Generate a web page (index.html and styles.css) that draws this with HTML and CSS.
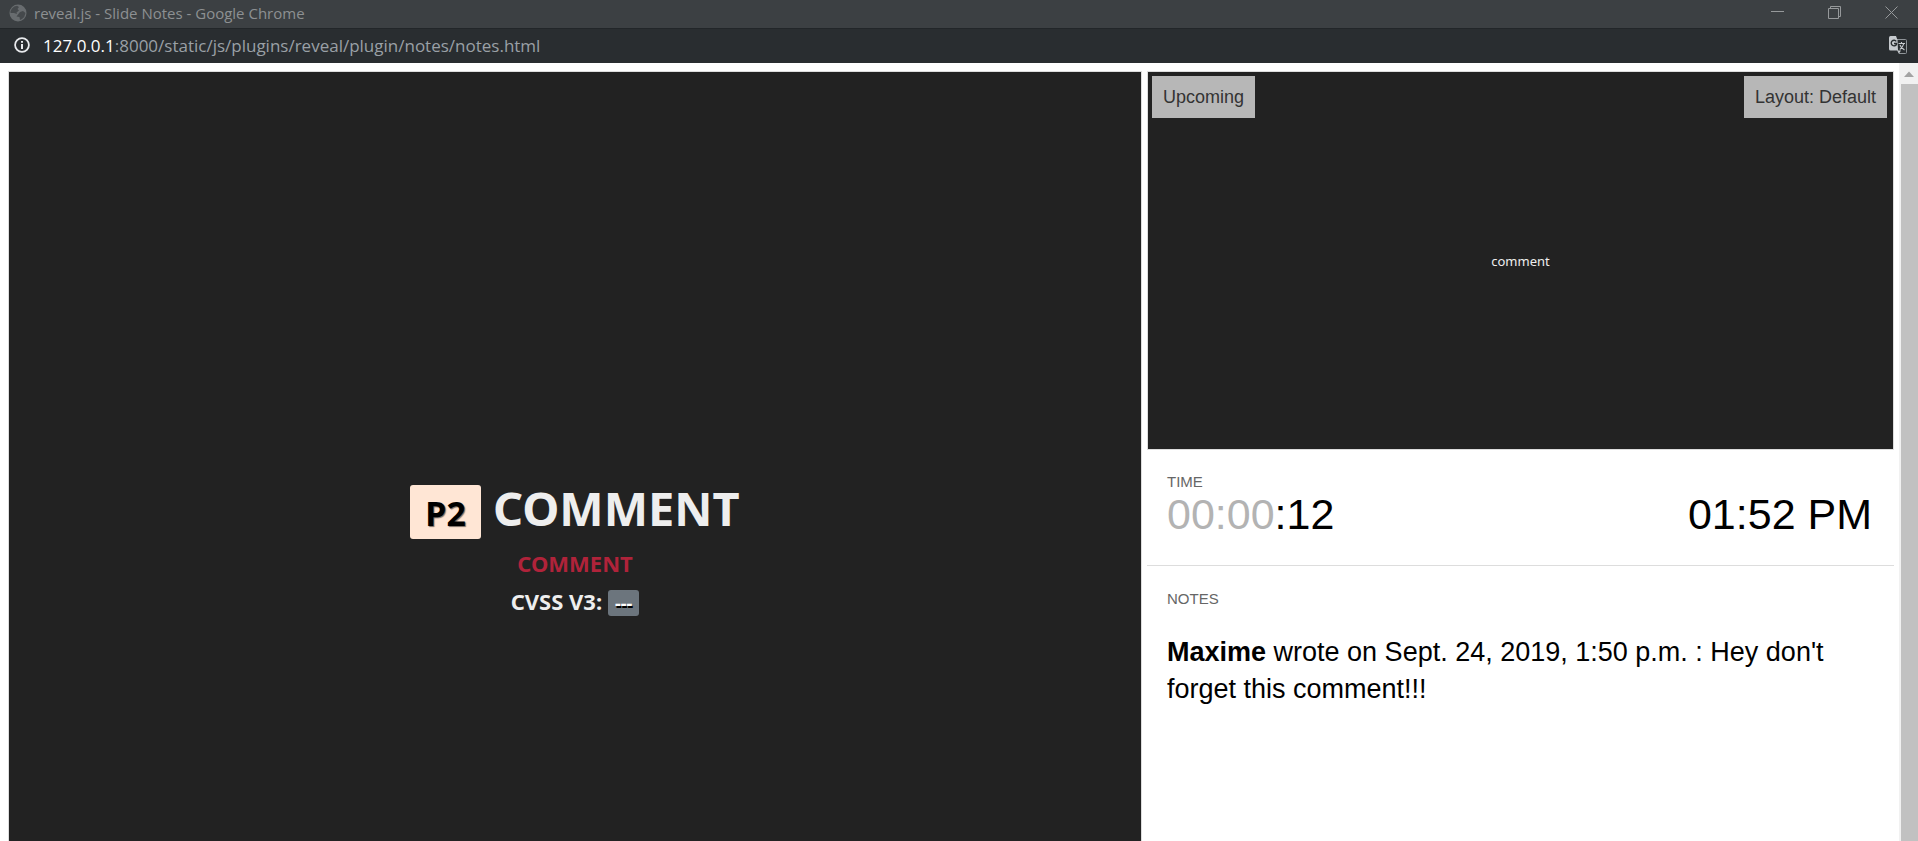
FILE: index.html
```html
<!DOCTYPE html>
<html lang="en">
<head>
<meta charset="utf-8">
<title>reveal.js - Slide Notes</title>
<link rel="stylesheet" href="styles.css">
</head>
<body>
<header class="titlebar">
  <svg class="globe" viewBox="0 0 18 18" aria-hidden="true"><circle cx="9" cy="9" r="8.500" fill="#686c6f"/><path d="M3 4.500Q5 2 8 1.800L10 3L8.500 5L10 6.500L7.500 8.500L8 10L5 9L1.500 9Q1.300 6.500 3 4.500ZM11 8L14 7L16.500 9Q16 13 13 15L11 16L10.500 13L7.500 12.500L9 10.500Z" fill="#45494c"/></svg>
  <span class="window-title">reveal.js - Slide Notes - Google Chrome</span>
  <div class="window-controls">
    <button type="button" aria-label="Minimize"><svg viewBox="0 0 14 14"><path d="M0 5.500H13"/></svg></button>
    <button type="button" aria-label="Restore"><svg viewBox="0 0 14 14"><path d="M.5 2.500H10.500V12.500H.5ZM2.500 2.500V.5H12.500V10.500H10.500"/></svg></button>
    <button type="button" aria-label="Close"><svg viewBox="0 0 14 14"><path d="M.5 .5L12.500 12.500M12.500 .5L.5 12.500"/></svg></button>
  </div>
</header>
<nav class="addressbar">
  <button type="button" class="info" aria-label="Site information"><svg viewBox="0 0 16 16"><circle cx="8" cy="8" r="6.900" fill="none" stroke="#e8eaed" stroke-width="1.800"/><path d="M7 4H9V5.800H7ZM7 7H9V12H7Z" fill="#e8eaed"/></svg></button>
  <span class="url"><b>127.0.0.1</b>:8000/static/js/plugins/reveal/plugin/notes/notes.html</span>
  <button type="button" class="translate" aria-label="Translate this page"><svg viewBox="0 0 18 18"><path d="M8 3.500H16.500Q17.500 3.500 17.500 4.500V16.500Q17.500 17.500 16.500 17.500H10L8.500 14" fill="none" stroke="#8f9498"/><path d="M1.500 0H7L8.500 4L9 14.500H1.500Q0 14.500 0 13V1.500Q0 0 1.500 0Z" fill="#c6cace"/><path d="M8.500 14.500H12L10 17.500Z" fill="#c6cace"/><path d="M7.300 5.400A2.800 2.800 0 1 0 7.500 8.400V7.500H5" fill="none" stroke="#292d30" stroke-width="1.400"/><path d="M9.500 7.500H16M12.500 6V7.500M14.800 7.500Q14 11 10.800 13.500M11 9Q12 12 15.500 14" fill="none" stroke="#c6cace" stroke-width="1.100"/></svg></button>
</nav>
<div class="viewport">
  <main class="notes-page">
    <section class="current-slide">
      <h1><span class="badge priority">P2</span> COMMENT</h1>
      <h2>COMMENT</h2>
      <h3>CVSS V3: <span class="badge score">---</span></h3>
    </section>
    <aside class="side">
      <section class="upcoming-slide">
        <span class="overlay upcoming-label">Upcoming</span>
        <button type="button" class="overlay layout-button">Layout: Default</button>
        <p>comment</p>
      </section>
      <section class="time">
        <h4>TIME</h4>
        <div class="clocks">
          <span><span class="mute">00:00</span>:12</span>
          <span>01:52 PM</span>
        </div>
      </section>
      <section class="notes">
        <h4>NOTES</h4>
        <p><strong>Maxime</strong> wrote on Sept. 24, 2019, 1:50 p.m. : Hey don't forget this comment!!!</p>
      </section>
    </aside>
  </main>
  <div class="scrollbar" aria-hidden="true">
    <svg viewBox="0 0 19 21"><path d="M5 14H15L10 8.500Z" fill="#a3a3a3"/></svg>
    <div class="thumb"></div>
  </div>
</div>
</body>
</html>
```
FILE: styles.css
```css
* { box-sizing: border-box; }
body {
  margin: 0;
  height: 100vh;
  display: flex;
  flex-direction: column;
  overflow: hidden;
  background: #fff;
  color: #000;
  font-family: "Liberation Sans", Arial, sans-serif;
}
h1, h2, h3, h4, p { margin: 0; }
button { border: 0; padding: 0; background: none; font: inherit; color: inherit; display: block; }
svg { display: block; }

.titlebar {
  flex: none;
  height: 28px;
  display: flex;
  align-items: center;
  padding: 0 19px 2px 9px;
  background: #3c4043;
  color: #8d9092;
  font: 15px "Open Sans", sans-serif;
}
.globe { width: 18px; height: 18px; margin-right: 7px; }
.window-controls { margin-left: auto; display: flex; gap: 43px; }
.window-controls svg { width: 14px; height: 14px; fill: none; stroke: #96999b; }

.addressbar {
  flex: none;
  height: 35px;
  display: flex;
  align-items: center;
  padding: 0 11px 2px 14px;
  background: #292d30;
  border-top: 1px solid #222629;
  color: #9aa0a6;
  font: 17px "Open Sans", sans-serif;
}
.info svg { width: 16px; height: 16px; }
.url { margin-left: 13px; }
.url b { font-weight: 400; color: #fff; }
.translate { margin-left: auto; }
.translate svg { width: 18px; height: 18px; }

.viewport { flex: 1; min-height: 0; display: flex; }
.notes-page {
  flex: 1;
  display: grid;
  grid-template-columns: 1134fr 747fr;
  gap: 5px;
  padding: 8px 5px 0 8px;
}
.current-slide, .upcoming-slide { background: #222; border: 1px solid #ddd; }
.current-slide {
  border-bottom: 0;
  display: flex;
  flex-direction: column;
  align-items: center;
  padding-top: 404px;
  color: #eee;
  font-family: "Noto Sans", sans-serif;
}
.current-slide h1, .current-slide h2, .current-slide h3 { font-weight: 700; }
.current-slide h1 { font-size: 47px; line-height: 64px; display: flex; gap: 12px; }
.current-slide h2 { font-size: 22px; line-height: 28px; margin-top: 9px; color: #b0233a; }
.current-slide h3 { font-size: 22px; line-height: 28px; margin-top: 10px; display: flex; gap: 6px; }
.badge { border-radius: 3px; }
.priority {
  margin-top: 9px;
  padding: 0 15px;
  height: 54px;
  line-height: 56px;
  background: #ffe6d5;
  color: #000;
  font-size: 34px;
  text-shadow: 1px 1px 1px #0008;
}
.score {
  margin-top: 3px;
  padding: 0 7px;
  height: 26px;
  line-height: 26px;
  background: #6c757d;
  color: #fff;
  font-size: 18px;
  text-shadow: 1px 2px 0 #000;
}

.side { display: flex; flex-direction: column; }
.upcoming-slide {
  position: relative;
  height: 379px;
  display: grid;
  place-items: center;
  color: #eee;
  font: 13px "Noto Sans", sans-serif;
}
.overlay {
  position: absolute;
  top: 4px;
  padding: 0 11px;
  background: #b7b7b7;
  color: #333;
  font: 18px/42px "Liberation Sans", Arial, sans-serif;
}
.upcoming-label { left: 4px; }
.layout-button { right: 6px; }

.time { padding: 22px 22px 0 20px; height: 116px; border-bottom: 1px solid #ddd; }
.time h4, .notes h4 { font-size: 15px; line-height: 20px; font-weight: 400; color: #666; }
.clocks { display: flex; justify-content: space-between; font-size: 43px; line-height: 44px; }
.mute { color: #b3b3b3; }
.notes { padding: 23px 20px; }
.notes p { margin-top: 25px; font-size: 27px; line-height: 37px; }

.scrollbar { flex: none; width: 19px; background: #f1f1f1; display: flex; flex-direction: column; }
.scrollbar svg { width: 19px; height: 21px; }
.thumb { flex: 1; margin-left: 2px; background: #c1c1c1; }
```
